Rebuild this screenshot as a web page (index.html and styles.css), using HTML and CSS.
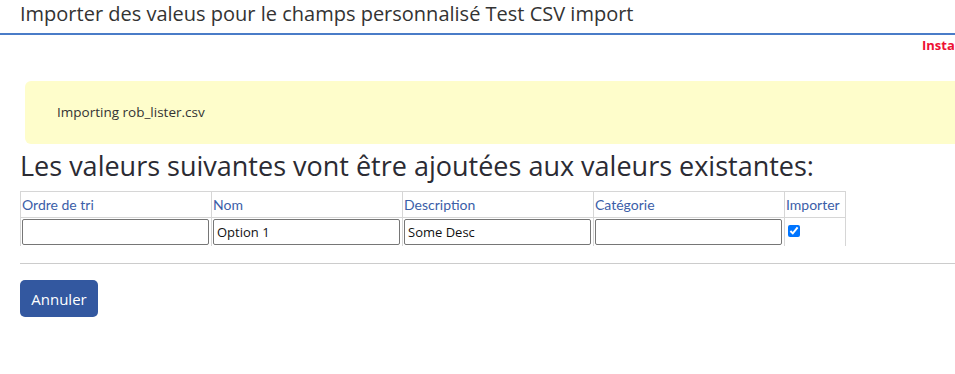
FILE: index.html
```html
<!DOCTYPE html>
<html lang="fr">
<head>
    <meta charset="UTF-8">
    <title>Importer des valeurs</title>
    <link rel="stylesheet" href="styles.css">
</head>
<body>
    <div class="page-header">
        <h1>Importer des valeus pour le champs personnalisé Test CSV import</h1>
    </div>
    <div class="topbar">
        <span class="install-warning">Insta</span>
    </div>

    <div class="content">
        <div class="notice">
            <p>Importing rob_lister.csv</p>
        </div>

        <h2>Les valeurs suivantes vont être ajoutées aux valeurs existantes:</h2>

        <table class="values-table">
            <tr>
                <th>Ordre de tri</th>
                <th>Nom</th>
                <th>Description</th>
                <th>Catégorie</th>
                <th>Importer</th>
            </tr>
            <tr>
                <td><input type="text" value=""></td>
                <td><input type="text" value="Option 1"></td>
                <td><input type="text" value="Some Desc"></td>
                <td><input type="text" value=""></td>
                <td class="check-cell"><input type="checkbox" checked></td>
            </tr>
        </table>

        <hr>

        <button class="cancel-btn">Annuler</button>
    </div>
</body>
</html>
```

FILE: styles.css
```css
body {
    margin: 0;
    font-family: "Open Sans", "Noto Sans", sans-serif;
    color: #333;
    background-color: #fff;
    overflow: hidden;
}

.page-header {
    height: 33px;
    border-bottom: 2px solid #4a7cc8;
    padding-left: 20px;
}

.page-header h1 {
    margin: 0;
    padding-top: 1px;
    font-size: 20px;
    font-weight: normal;
    line-height: 26px;
    color: #333;
}

.topbar {
    height: 20px;
    padding-left: 922px;
    white-space: nowrap;
    overflow: hidden;
}

.install-warning {
    display: block;
    padding-top: 2px;
    font-size: 13px;
    font-weight: bold;
    line-height: 16px;
    color: #ee1133;
}

.content {
    padding-left: 20px;
}

.notice {
    margin: 26px -20px 0 5px;
    height: 63px;
    display: flex;
    align-items: center;
    padding-left: 32px;
    padding-bottom: 2px;
    box-sizing: border-box;
    background-color: #fefdcb;
    border-radius: 6px 0 0 6px;
}

.notice p {
    margin: 0;
    font-size: 13.5px;
    color: #333;
}

.content h2 {
    margin: 6px 0 9px 0;
    font-size: 27px;
    font-weight: normal;
    line-height: 32px;
    color: #2b2b33;
}

.values-table {
    border-collapse: collapse;
    font-family: Lato, "Open Sans", sans-serif;
    font-size: 14px;
}

.values-table th {
    width: 188px;
    height: 25px;
    padding: 0 1px;
    text-align: left;
    font-weight: normal;
    color: #3b5ea8;
    border: 1px solid #d6d6d6;
    vertical-align: middle;
}

.values-table th:last-child {
    width: 58px;
}

.values-table td {
    height: 27px;
    padding: 1px 1px 0 1px;
    border-left: 1px solid #d6d6d6;
    border-right: 1px solid #d6d6d6;
    vertical-align: top;
}

.values-table input[type="text"] {
    box-sizing: border-box;
    width: 187px;
    height: 26px;
    margin: 0;
    padding: 0 3px;
    border: 1px solid #767676;
    border-radius: 2px;
    font-family: "Open Sans", "Noto Sans", sans-serif;
    font-size: 13px;
    color: #111;
}

.check-cell input {
    margin: 6px 0 0 2px;
    width: 12px;
    height: 12px;
}

hr {
    margin: 17px 0 0 0;
    border: none;
    border-top: 1px solid #cccccc;
}

.cancel-btn {
    margin-top: 16px;
    width: 78px;
    height: 37px;
    background-color: #3358a0;
    color: #fff;
    border: none;
    border-radius: 5px;
    font-family: "Open Sans", "Noto Sans", sans-serif;
    font-size: 15px;
    cursor: pointer;
}
```
